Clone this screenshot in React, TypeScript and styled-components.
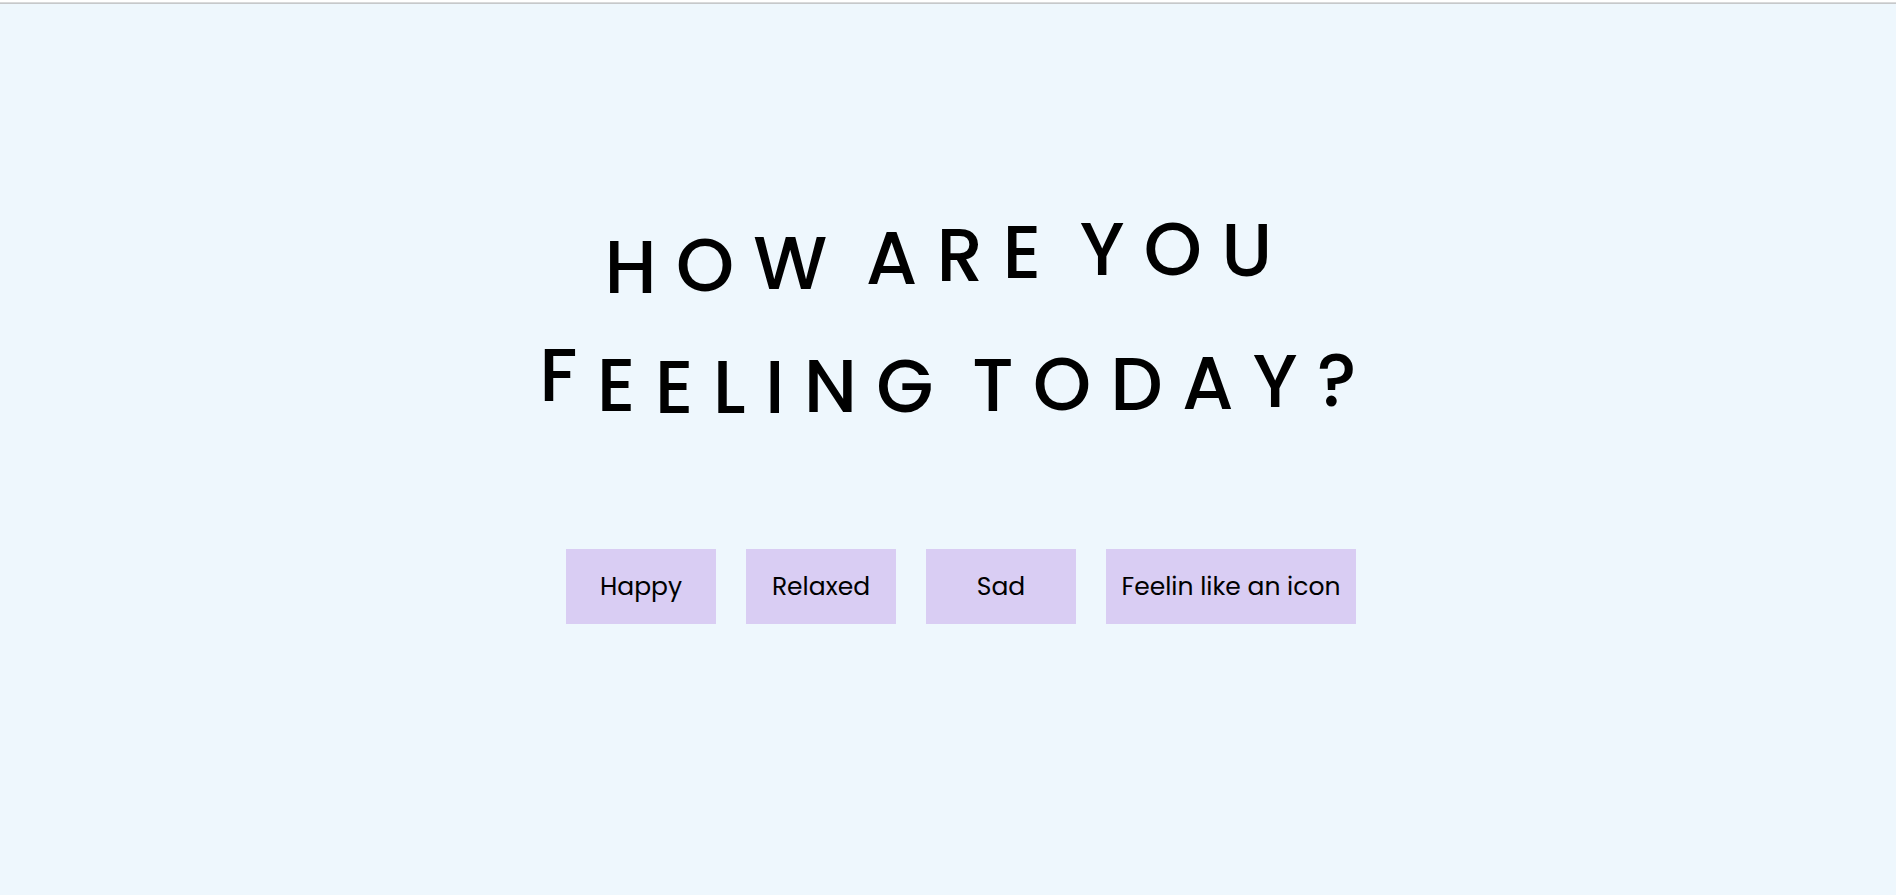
import React, { Fragment } from 'react';
import styled, { createGlobalStyle } from 'styled-components';

const GlobalStyle = createGlobalStyle`
  * { box-sizing: border-box; }
  body {
    margin: 0;
    background: #eef7fd;
    color: #000;
    font-family: Poppins, Inter, sans-serif;
  }
`;

const TopRule = styled.hr`
  height: 4px;
  margin: 0;
  border: 0;
  border-top: 2px solid #fff;
  background: linear-gradient(#d9dadb 50%, #c6c8ca 50%);
`;

const Page = styled.main`
  padding: 181px 0 96px;
`;

const Title = styled.h1`
  margin: 0;
  font-size: 74px;
  line-height: 127px;
  font-weight: 500;
  text-align: center;
`;

const Line = styled.span`
  display: block;
  white-space: pre;
`;

const Letter = styled.span<{ $drop: number }>`
  display: inline-block;
  transform: translateY(${(p) => p.$drop}px);
`;

const Moods = styled.div`
  display: flex;
  justify-content: center;
  gap: 30px;
  margin-top: 110px;
  padding-left: 26px;
`;

const MoodButton = styled.button<{ $wide?: boolean }>`
  width: ${(p) => (p.$wide ? 250 : 150)}px;
  height: 75px;
  padding: 0;
  border: 0;
  background: #d9cdf3;
  color: #000;
  font: 400 25px Poppins, Inter, sans-serif;
  cursor: pointer;
`;

/* Each character of a line is one step of the wave; drops are in pixels. */
const lines = [
  { text: 'HOW ARE YOU ', drops: [19, 17, 15, 0, 10, 7, 4, 0, 1, 1, 2, 0] },
  { text: 'FEELING TODAY?', drops: [0, 10, 12, 12, 12, 11, 11, 0, 10, 9, 9, 8, 6, 5] },
];

export default function App() {
  return (
    <>
      <GlobalStyle />
      <TopRule />
      <Page>
        <Title aria-label="HOW ARE YOU FEELING TODAY?">
          {lines.map(({ text, drops }) => (
            <Line key={text}>
              {[...text].map((letter, n) =>
                letter === ' ' ? (
                  <Fragment key={n}> </Fragment>
                ) : (
                  <Fragment key={n}>
                    {n > 0 && ' '}
                    <Letter $drop={drops[n]}>{letter}</Letter>
                  </Fragment>
                ),
              )}
            </Line>
          ))}
        </Title>
        <Moods>
          <MoodButton>Happy</MoodButton>
          <MoodButton>Relaxed</MoodButton>
          <MoodButton>Sad</MoodButton>
          <MoodButton $wide>Feelin like an icon</MoodButton>
        </Moods>
      </Page>
    </>
  );
}
